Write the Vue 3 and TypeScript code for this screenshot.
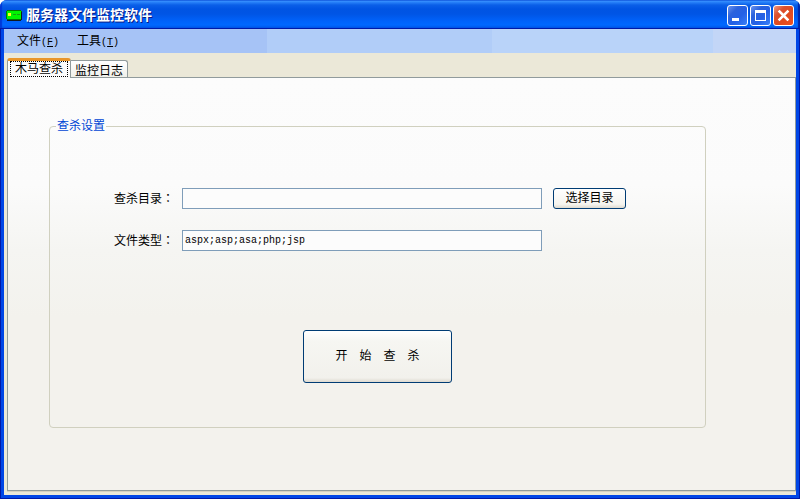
<script setup lang="ts">
import { ref } from 'vue'

interface MenuEntry {
  label: string
  key: string
}

const menus: MenuEntry[] = [
  { label: '文件', key: 'F' },
  { label: '工具', key: 'T' },
]
const tabs: string[] = ['木马查杀', '监控日志']
const activeTab = ref(0)
const directory = ref('')
const fileTypes = ref('aspx;asp;asa;php;jsp')
</script>

<template>
  <div class="window">
    <header class="titlebar">
      <svg class="app-icon" width="16" height="16" viewBox="0 0 16 16" aria-hidden="true" shape-rendering="crispEdges">
        <path d="M1 12h14V3h1v9h-1v1H1z" fill="#101820" />
        <path d="M1 2h14v1h1v1h-1v8H1v-1H0V3h1z" fill="#007a00" />
        <rect x="1" y="3" width="14" height="8" fill="#00f400" />
        <rect x="2" y="5" width="3" height="3" fill="#ffff20" />
        <rect x="7" y="6" width="3" height="1" fill="#10a010" />
        <rect x="11" y="6" width="3" height="1" fill="#10a010" />
      </svg>
      <h1 class="title">服务器文件监控软件</h1>
      <div class="controls">
        <button class="control" type="button" aria-label="最小化">
          <svg width="19" height="19" viewBox="0 0 19 19" shape-rendering="crispEdges"><rect x="4" y="12" width="7" height="3" fill="#fff" /></svg>
        </button>
        <button class="control" type="button" aria-label="最大化">
          <svg width="19" height="19" viewBox="0 0 19 19" shape-rendering="crispEdges"><path d="M4 4h11v11H4zM5 7v7h9V7z" fill="#fff" fill-rule="evenodd" /></svg>
        </button>
        <button class="control close" type="button" aria-label="关闭">
          <svg width="19" height="19" viewBox="0 0 19 19"><path d="M5.500 5.500l8 8M13.500 5.500l-8 8" stroke="#fff" stroke-width="2.500" stroke-linecap="square" /></svg>
        </button>
      </div>
    </header>

    <div class="body">
      <nav class="menubar">
        <button v-for="menu in menus" :key="menu.key" class="menu" type="button">
          {{ menu.label }}<span class="latin">(<u>{{ menu.key }}</u>)</span>
        </button>
      </nav>

      <div class="tabs" role="tablist">
        <button
          v-for="(tab, index) in tabs"
          :key="tab"
          class="tab"
          :class="{ active: index === activeTab }"
          type="button"
          role="tab"
          :aria-selected="index === activeTab"
          @click="activeTab = index"
        ><span class="tab-text">{{ tab }}</span></button>
      </div>

      <main class="pane" role="tabpanel">
        <fieldset v-if="activeTab === 0" class="group">
          <legend class="legend">查杀设置</legend>
          <form class="form" @submit.prevent>
            <div class="rows">
              <label class="label" for="directory">查杀目录<span class="colon">：</span></label>
              <input id="directory" v-model="directory" class="field" type="text" />
              <button class="button browse" type="button">选择目录</button>
              <label class="label" for="types">文件类型<span class="colon">：</span></label>
              <input id="types" v-model="fileTypes" class="field" type="text" />
            </div>
            <button class="button start" type="submit">开　始　查　杀</button>
          </form>
        </fieldset>
      </main>
    </div>
  </div>
</template>

<style>
body {
  margin: 0;
  background: #fff;
}
</style>

<style scoped>
.window {
  box-sizing: border-box;
  display: flex;
  flex-direction: column;
  min-height: 100vh;
  border-radius: 7px 7px 0 0;
  overflow: hidden;
  background: #0046dc;
  color: #000;
  font: 12px/14px "Noto Sans CJK SC", sans-serif;
}
.window button,
.window input {
  box-sizing: border-box;
  margin: 0;
  color: inherit;
  font: inherit;
}
.titlebar {
  box-sizing: border-box;
  display: flex;
  align-items: center;
  height: 29px;
  padding: 2px 6px 0;
  background: linear-gradient(#0a58e0 0, #3a92ff 1px, #2a84fa 2px, #0a5fe8 5px, #0054e3 9px, #0055e5 14px, #0062fa 21px, #0068ff 25px, #005cf0 27px, #0040cc 29px);
  box-shadow: inset -2px 0 1px #0024a8, inset 2px 0 1px #0038d8;
}
.app-icon {
  display: block;
}
.title {
  flex: 1;
  margin: 0 0 0 4px;
  padding-bottom: 3px;
  color: #fff;
  font-size: 14px;
  line-height: 20px;
  font-weight: 700;
  text-shadow: 1px 1px #0a1883;
}
.controls {
  display: flex;
  gap: 2px;
}
.control {
  width: 21px;
  height: 21px;
  padding: 0;
  border: 1px solid #fff;
  border-radius: 3px;
  background: linear-gradient(135deg, #6a94f0 0, #2c62dc 30%, #2460e6 60%, #3a80f8 100%);
}
.control.close {
  background: linear-gradient(135deg, #f09a80 0, #dc5030 30%, #e04a20 60%, #f05020 100%);
}
.control svg {
  display: block;
}
.body {
  flex: 1;
  display: flex;
  flex-direction: column;
  margin: 0 1px 1px;
  border: solid #0046e6;
  border-width: 0 3px 3px;
  background: #ebe8d8;
  box-shadow: 0 0 0 1px #0019a8;
}
.menubar {
  display: flex;
  gap: 6px;
  height: 24px;
  padding-left: 7px;
  background: linear-gradient(90deg, #a6c3f6 33.2%, #b1cdf8 33.2% 61.6%, #b9d3f9 61.6% 89.5%, #c3d6f7 89.5%);
}
.window .menu {
  padding: 0 6px;
  border: 0;
  background: none;
}
.window .latin {
  font: 10px/14px "Liberation Mono", monospace;
}
.tabs {
  display: flex;
  align-items: flex-end;
  height: 24px;
  padding-left: 3px;
}
.tab {
  height: 17px;
  padding: 0 3px;
  border: 1px solid #919b9c;
  border-width: 1px 1px 0 0;
  border-radius: 0 3px 0 0;
  background: linear-gradient(#fff, #f0f0ea);
}
.tab-text {
  display: block;
  padding: 1px 1px 0;
  white-space: nowrap;
}
.window .tab.active {
  position: relative;
  z-index: 1;
  height: 20px;
  margin-bottom: -1px;
  padding: 0 2px 1px;
  border: solid #919b9c;
  border-width: 3px 1px 0;
  border-top-color: #e9962a;
  border-radius: 3px 3px 0 0;
  background: #fcfcfc;
}
.active .tab-text {
  box-sizing: border-box;
  height: 16px;
  padding: 0 4px;
  border: 1px dotted #000;
  line-height: 12px;
}
.pane {
  flex: 1;
  box-sizing: border-box;
  margin: 0 0 4px 3px;
  padding: 41px 89px 40px 41px;
  border: 1px solid #919b9c;
  background: linear-gradient(#fcfcfc 0, #fbfbfb 26%, #f5f5f2 42%, #f3f2ed 58%);
  box-shadow: 0 1px #d5d1c0;
}
.group {
  min-width: 0;
  margin: 0;
  padding: 0;
  border: 1px solid #d0d0bf;
  border-radius: 4px;
}
.legend {
  margin-left: 6px;
  padding: 0 1px 4px;
  color: #0046d5;
  line-height: 11px;
}
.form {
  display: flex;
  flex-direction: column;
  align-items: center;
  gap: 79px;
  padding: 54px 0 44px;
}
.rows {
  box-sizing: border-box;
  display: grid;
  grid-template-columns: auto 1fr 84px;
  row-gap: 21px;
  align-items: center;
  width: 100%;
  padding: 0 79px 0 64px;
}
.label {
  grid-column: 1;
  margin-right: 8px;
  padding-bottom: 2px;
}
.colon {
  font-family: "Noto Sans CJK JP", sans-serif;
}
.window .field {
  min-width: 0;
  width: 100%;
  height: 21px;
  padding: 0 2px;
  border: 1px solid #7f9db9;
  background: #fcfcfc;
  font: 10px/14px "Liberation Mono", monospace;
}
.window .button {
  width: 73px;
  height: 21px;
  padding: 0 0 3px;
  border: 1px solid #003c74;
  border-radius: 3px;
  background: linear-gradient(#fff, #f5f4ef 80%, #dfdbd0);
}
.browse {
  justify-self: end;
}
.window .start {
  width: 149px;
  height: 53px;
  background: linear-gradient(#fff 0, #f6f6f2 20%, #f2f1ec 92%, #dedad0);
}
</style>
